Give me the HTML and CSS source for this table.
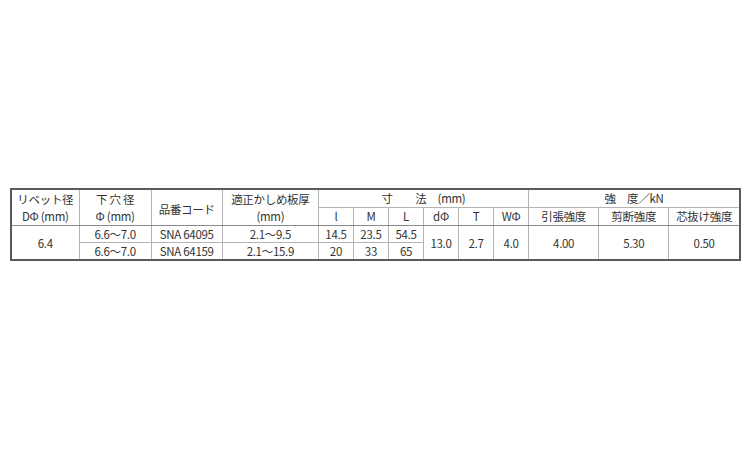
FILE: index.html
```html
<!DOCTYPE html>
<html lang="ja">
<head>
<meta charset="utf-8">
<link rel="stylesheet" href="styles.css">
</head>
<body>
<div class="page">
<table class="spec">
  <colgroup>
    <col class="c-rivet"><col class="c-hole"><col class="c-code"><col class="c-grip">
    <col class="c-s"><col class="c-s"><col class="c-s"><col class="c-s"><col class="c-s"><col class="c-s">
    <col class="c-st"><col class="c-st"><col class="c-st3">
  </colgroup>
  <thead>
    <tr class="h1">
      <th rowspan="2">リベット径<br>DΦ (mm)</th>
      <th rowspan="2">下 穴 径<br>Φ (mm)</th>
      <th rowspan="2" class="mid">品番コード</th>
      <th rowspan="2">適正かしめ板厚<br>(mm)</th>
      <th colspan="6">寸　　法　(mm)</th>
      <th colspan="3">強　度／kN</th>
    </tr>
    <tr class="h2">
      <th>l</th><th>M</th><th>L</th><th>dΦ</th><th>T</th><th>WΦ</th>
      <th>引張強度</th><th>剪断強度</th><th>芯抜け強度</th>
    </tr>
  </thead>
  <tbody>
    <tr>
      <td rowspan="2">6.4</td>
      <td>6.6～7.0</td>
      <td>SNA 64095</td>
      <td>2.1～9.5</td>
      <td>14.5</td><td>23.5</td><td>54.5</td>
      <td rowspan="2">13.0</td><td rowspan="2">2.7</td><td rowspan="2">4.0</td>
      <td rowspan="2">4.00</td><td rowspan="2">5.30</td><td rowspan="2">0.50</td>
    </tr>
    <tr>
      <td>6.6～7.0</td>
      <td>SNA 64159</td>
      <td>2.1～15.9</td>
      <td>20</td><td>33</td><td>65</td>
    </tr>
  </tbody>
</table>
</div>
</body>
</html>
```
FILE: styles.css
```css
html, body {
  margin: 0;
  padding: 0;
  background: #fff;
}
.page {
  padding: 188px 0 0 10px;
}
.spec {
  border-collapse: collapse;
  table-layout: fixed;
  width: 731px;
  border: 2px solid #5a5a5a;
  font-family: "Noto Sans CJK JP", "Noto Sans", sans-serif;
  font-size: 11.5px;
  color: #333;
  letter-spacing: -0.3px;
}
.c-rivet { width: 68px; }
.c-hole { width: 72px; }
.c-code { width: 71px; }
.c-grip { width: 96px; }
.c-s { width: 35px; }
.c-st { width: 70px; }
.c-st3 { width: 71px; }
.spec th, .spec td {
  border: 1px solid #b4b4b4;
  padding: 0;
  text-align: center;
  vertical-align: middle;
  font-weight: normal;
  line-height: 17px;
  height: 17px;
  white-space: nowrap;
  overflow: hidden;
}
.spec td {
  line-height: 16px;
  height: 16px;
}
.spec thead tr.h1 th {
  border-top: 2px solid #5a5a5a;
}
.spec thead tr.h2 th,
.spec thead tr.h1 th[rowspan] {
  border-bottom: 1px solid #8a8a8a;
}
.spec thead th.mid {
  padding-top: 4px;
}
```
